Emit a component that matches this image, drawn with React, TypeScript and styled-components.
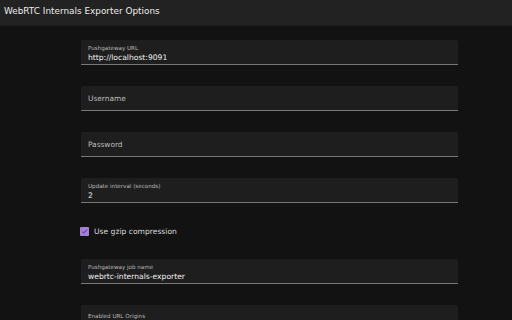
import React from "react";
import styled, { createGlobalStyle } from "styled-components";

const Global = createGlobalStyle`
  html, body { margin: 0; padding: 0; background: #121212; }
  body { font-family: "DejaVu Sans", sans-serif; color: #e6e6e6; }
`;

const Page = styled.div`
  width: 512px;
  height: 320px;
  overflow: hidden;
  background: #121212;
  display: flex;
  flex-direction: column;
`;

const Header = styled.header`
  height: 26px;
  flex: none;
  background: #222222;
  border-bottom: 1px solid #1b1b1b;
  display: flex;
  align-items: center;
  padding: 0 4px 4px;
  box-sizing: border-box;
  font-size: 8.9px;
  color: #ececec;
`;

const Form = styled.main`
  padding: 14px 0 0 81px;
  width: 377px;
  display: flex;
  flex-direction: column;
`;

const Field = styled.div<{ $gap?: number }>`
  position: relative;
  height: 25px;
  flex: none;
  box-sizing: border-box;
  background: #1e1e1e;
  border-bottom: 1px solid #777777;
  border-radius: 2px 2px 0 0;
  margin-bottom: ${(p) => p.$gap ?? 21}px;
  display: flex;
  flex-direction: column;
  justify-content: center;
  padding: 0 7px;
`;

const TallField = styled(Field)`
  height: 40px;
  justify-content: flex-start;
  padding-top: 5px;
`;

const SmallLabel = styled.label`
  font-size: 5.6px;
  color: #b8b8b8;
  line-height: 7px;
  margin-top: 3px;
`;

const Value = styled.div`
  font-size: 7.6px;
  color: #f0f0f0;
  line-height: 11px;
`;

const Placeholder = styled.div`
  font-size: 7.4px;
  color: #bdbdbd;
  line-height: 11px;
`;

const CheckRow = styled.label`
  display: flex;
  align-items: center;
  gap: 5px;
  height: 14px;
  margin: 0 0 21px -1px;
  font-size: 7.6px;
  color: #d8d8d8;
`;

const Box = styled.span`
  width: 9px;
  height: 9px;
  border-radius: 1px;
  background: #a27fd8;
  display: flex;
  align-items: center;
  justify-content: center;
`;

function TextField({ label, value, gap }: { label: string; value?: string; gap?: number }) {
  return (
    <Field $gap={gap}>
      {value !== undefined ? (
        <>
          <SmallLabel>{label}</SmallLabel>
          <Value>{value}</Value>
        </>
      ) : (
        <Placeholder>{label}</Placeholder>
      )}
    </Field>
  );
}

export default function App() {
  return (
    <Page>
      <Global />
      <Header>WebRTC Internals Exporter Options</Header>
      <Form>
        <TextField label="Pushgateway URL" value="http://localhost:9091" />
        <TextField label="Username" />
        <TextField label="Password" />
        <TextField label="Update interval (seconds)" value="2" />
        <CheckRow>
          <Box>
            <svg width="7" height="7" viewBox="0 0 24 24">
              <path d="M4 12.5l5 5L20 6" fill="none" stroke="#3a2a55" strokeWidth="3" />
            </svg>
          </Box>
          Use gzip compression
        </CheckRow>
        <TextField label="Pushgateway job name" value="webrtc-internals-exporter" />
        <TallField $gap={0}>
          <SmallLabel>Enabled URL Origins</SmallLabel>
        </TallField>
      </Form>
    </Page>
  );
}
